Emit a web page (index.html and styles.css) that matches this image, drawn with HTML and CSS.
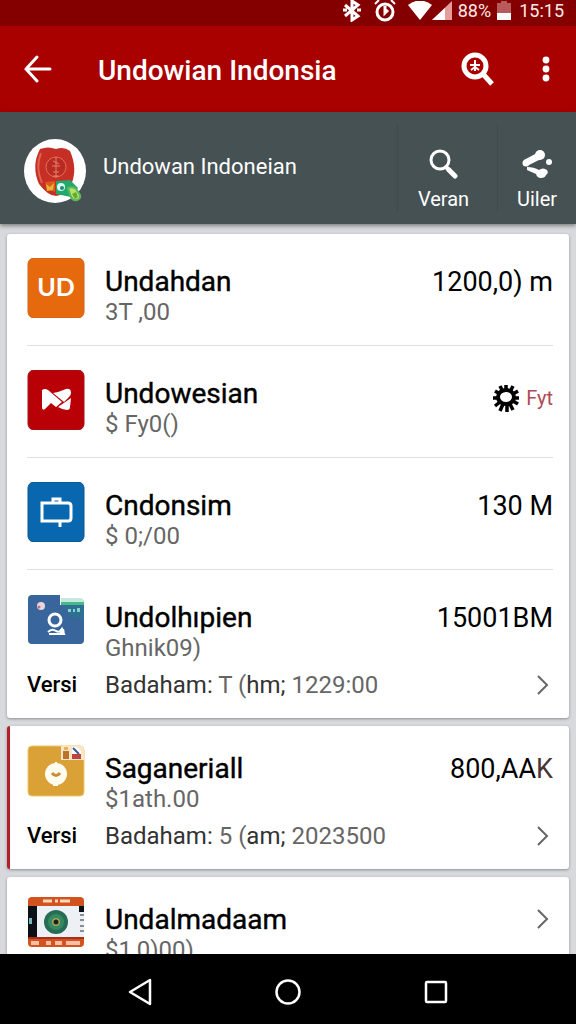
FILE: index.html
```html
<!DOCTYPE html>
<html lang="id">
<head>
  <meta charset="utf-8">
  <meta name="viewport" content="width=device-width, initial-scale=1">
  <title>Undowian Indonsia</title>
  <link rel="stylesheet" href="styles.css">
</head>
<body>
  <div class="screen">
    <div class="status-bar">
      <svg class="bluetooth" width="20" height="22" viewBox="0 0 20 22" fill="none" stroke="#fff" stroke-width="3"><path d="M3 5l13 11-6 4V1l6 4L3 16M1 10h4M15 10h4"/></svg>
      <svg class="alarm" width="22" height="22" viewBox="0 0 22 22" fill="none" stroke="#fff"><circle cx="11" cy="12" r="8" stroke-width="3"/><path d="M11 6v7l3-3" stroke-width="3"/><path d="M1 4l4-4M21 4l-4-4" stroke-width="2"/></svg>
      <svg width="24" height="20" viewBox="0 0 24 20"><path d="M0 4Q12-5 24 4L12 19z" fill="#fff"/></svg>
      <svg class="signal" width="20" height="20" viewBox="0 0 20 20"><path d="M0 19L20 0v19z" fill="#e79c9c"/><path d="M0 19L13 7v12z" fill="#fff"/></svg>
      <span class="battery-level">88%</span>
      <svg class="battery" width="14" height="20" viewBox="0 0 14 20"><path d="M4 0h6v2h4v10H0V2h4z" fill="#b85a5a"/><path d="M0 12h14v7H0z" fill="#fff"/></svg>
      <span>15:15</span>
    </div>

    <header class="app-bar">
      <button class="icon-button" aria-label="Back">
        <svg width="28" height="28" viewBox="0 0 28 28" fill="none" stroke="#fff" stroke-width="3" stroke-linecap="round"><path d="M26 14H2M13 2L2 14l11 12"/></svg>
      </button>
      <h1>Undowian Indonsia</h1>
      <button class="icon-button search-button" aria-label="Search">
        <svg width="34" height="34" viewBox="0 0 34 34" fill="none" stroke="#fff"><circle cx="15" cy="14" r="11" stroke-width="5"/><path d="M23 22l9 10" stroke-width="5"/><path d="M15 8v11M10 13h10M11 18l4-3 4 3" stroke-width="2"/></svg>
      </button>
      <button class="icon-button" aria-label="More">
        <svg width="8" height="26" viewBox="0 0 8 26" fill="#fff"><circle cx="4" cy="4" r="3.4"/><circle cx="4" cy="13" r="3.4"/><circle cx="4" cy="22" r="3.4"/></svg>
      </button>
    </header>

    <section class="profile">
      <svg class="avatar" width="62" height="64" viewBox="0 0 62 64">
        <ellipse cx="31" cy="32" rx="31" ry="32" fill="#fff"/>
        <path d="M16 10q8-3 16 0 8-3 14 2 8 18 1 34-7 11-15 11T15 45Q7 27 16 10z" fill="#c62f25"/>
        <path d="M17 14q-6 14 1 30" fill="none" stroke="#e0614f" stroke-width="2"/>
        <circle cx="32" cy="28" r="10" fill="#b92a22" stroke="#e56e57"/>
        <path d="M32 18v21M29 22l6 3M28 27h8M29 33h6M29 37h6" stroke="#e5806c"/>
        <path d="M21 43l10-1v11l-8-3z" fill="#dc5a1d"/>
        <path d="M22 45l4 3 4-4-1 7-6 1z" fill="#e8b62e"/>
        <path d="M32 42l14-1 8 8-7 9-15-3z" fill="#22a86e"/>
        <circle cx="37" cy="48" r="4" fill="#d8fff0"/><circle cx="38" cy="49" r="2" fill="#1d8c78"/>
        <path d="M44 49q5-2 8 1l4 6q1 4-3 5-4 1-6-3z" fill="#b7e36b" stroke="#5cb85c" stroke-width="2"/>
        <path d="M48 55l4-2 2 5-3 2z" fill="#69aa2e"/>
      </svg>
      <span class="profile-name">Undowan Indoneian</span>
      <button class="action">
        <svg width="30" height="30" viewBox="0 0 30 30" fill="none" stroke="#fff"><circle cx="11" cy="11" r="9" stroke-width="3"/><path d="M17 18l3 3" stroke-width="4"/><path d="M20 21l6 6" stroke-width="5" stroke-linecap="round"/></svg>
        <span>Veran</span>
      </button>
      <button class="action action-share">
        <svg width="30" height="30" viewBox="0 0 30 30" fill="#fff"><circle cx="18" cy="6" r="5"/><circle cx="27" cy="13" r="3"/><circle cx="4" cy="14" r="3.5"/><path d="M2 11l13-7 4 6-14 7z"/><path d="M5 18q7 0 12 3 4-3 8 0 2 3-1 5-1 3-5 3-4 0-5-4l-9-4z"/></svg>
        <span>Uiler</span>
      </button>
    </section>

    <main class="content">
      <div class="card">
        <div class="row">
          <svg class="row-icon" width="58" height="60" viewBox="0 0 58 60"><rect x="1" y="0" width="56" height="60" rx="6" fill="#e6690d" stroke="#c9651d"/><text class="logo-text" x="29" y="38" text-anchor="middle">UD</text></svg>
          <div class="text">
            <h2>Undahdan</h2>
            <p>3T ,00</p>
          </div>
          <span class="amount">1200,0) m</span>
        </div>
        <div class="row">
          <svg class="row-icon" width="58" height="60" viewBox="0 0 58 60"><rect x="1" y="0" width="56" height="60" rx="6" fill="#b90006" stroke="#98171b"/><path d="M15 20q3-2 6 0l14 12-6 5-5-4-6 6q-3 2-3-2z" fill="#fff"/><path d="M26 23l5-1 8-3q5-1 5 4 0 2-2 4l-5 5z" fill="#fff"/><path d="M44 28l-1 9q0 3-3 3-4 0-9-3z" fill="#fff"/></svg>
          <div class="text">
            <h2>Undowesian</h2>
            <p>$ Fy0()</p>
          </div>
          <span class="amount amount-red">
            <svg width="28" height="28" viewBox="0 0 28 28"><path d="M14 7V1M18 8l3-6M21 10l5-3M22 14h5M21 17l5 3M18 20l3 6M15 20v8M11 20l-3 7M8 18l-5 4M7 14H1M8 10L3 7M11 8L8 2" stroke="#000" stroke-width="3.500"/><ellipse cx="14" cy="13" rx="8" ry="7" fill="#fff" stroke="#000" stroke-width="4"/></svg>
            <span>Fyt</span>
          </span>
        </div>
        <div class="row">
          <svg class="row-icon" width="58" height="60" viewBox="0 0 58 60"><rect x="1" y="0" width="56" height="60" rx="6" fill="#0867ae" stroke="#07548d"/><path d="M15 21h26q3 0 3 3v12q0 3-3 3H15z" fill="none" stroke="#fff" stroke-width="3"/><path d="M26 21v-4h7v4M33 39v6" fill="none" stroke="#fff" stroke-width="3"/></svg>
          <div class="text">
            <h2>Cndonsim</h2>
            <p>$ 0;/00</p>
          </div>
          <span class="amount">130 M</span>
        </div>
        <div class="row">
          <svg class="row-icon" width="58" height="50" viewBox="0 0 58 50">
            <path d="M1 5q0-4 4-4h28v10h24v35q0 4-4 4H5q-4 0-4-4z" fill="#38659c"/>
            <path d="M34 4h19q4 0 4 4v3H34z" fill="#c9e8dd"/><path d="M34 8h23v3H34z" fill="#45b98b"/><path d="M37 11h20v13H45z" fill="#2f6f91"/>
            <path d="M41 15h3v3h-3zM46 15h2v3h-2zM50 14h3v4h-3z" fill="#80d4d0"/>
            <circle cx="14" cy="12" r="4" fill="#e9d6dc"/><circle cx="12" cy="13" r="1.500" fill="#b87484"/>
            <circle cx="28" cy="26" r="6" fill="none" stroke="#fff" stroke-width="3"/>
            <path d="M21 38q4-4 8-1 4 2 6-2l2 5H22" fill="none" stroke="#fff" stroke-width="2"/><circle cx="35" cy="37" r="2.500" fill="#fff"/>
          </svg>
          <div class="text">
            <h2>Undolhıpien</h2>
            <p>Ghnik09)</p>
          </div>
          <span class="amount">15001BM</span>
          <div class="detail">
            <strong>Versi</strong>
            <span class="detail-label">Badaham: <span class="detail-value">T (</span>hm; <span class="detail-value">1229:00</span></span>
            <button class="more" aria-label="Undolhıpien"><svg width="20" height="20" viewBox="0 0 20 20"><path d="M5 1l9 9-9 9" fill="none" stroke="#666" stroke-width="2"/></svg></button>
          </div>
        </div>
      </div>

      <div class="card card-marked">
        <div class="row">
          <svg class="row-icon" width="58" height="52" viewBox="0 0 58 52">
            <rect x="1" y="1" width="56" height="50" rx="4" fill="#d9a136" stroke="#f0c568"/>
            <path d="M34 1h20q3 0 3 3v11H34z" fill="#f8e7c6"/><path d="M36 6h6v8h-6z" fill="#bb722a"/><path d="M37 2h4v3h-4z" fill="#e8b15a"/><path d="M45 2h5l4 4v8h-9z" fill="#fff"/><path d="M46 3l6 6" stroke="#365a9b" stroke-width="2"/><path d="M45 9h9v5h-9z" fill="#bd4340"/>
            <circle cx="29" cy="29" r="11" fill="#fffdf0"/><path d="M25 28q4 5 8 0" fill="none" stroke="#c98c33" stroke-width="3"/><path d="M28 18h2M26 40h5" stroke="#fffdf0" stroke-width="2"/>
          </svg>
          <div class="text">
            <h2>Saganeriall</h2>
            <p>$1ath.00</p>
          </div>
          <span class="amount">800,AA<span class="amount-tail">K</span></span>
          <div class="detail">
            <strong>Versi</strong>
            <span class="detail-label">Badaham: <span class="detail-value">5 (</span>am; <span class="detail-value">2023500</span></span>
            <button class="more" aria-label="Saganeriall"><svg width="20" height="20" viewBox="0 0 20 20"><path d="M5 1l9 9-9 9" fill="none" stroke="#666" stroke-width="2"/></svg></button>
          </div>
        </div>
      </div>

      <div class="card">
        <div class="row">
          <svg class="row-icon" width="58" height="52" viewBox="0 0 58 52">
            <rect x="1" y="1" width="56" height="50" rx="4" fill="#d3531f"/>
            <path d="M1 10h56v32H1z" fill="#edf0f5"/><path d="M1 10h9v32H1zM52 10h5v6h-5z" fill="#0c1016"/><path d="M2 22h3v6H2z" fill="#75bac0"/>
            <path d="M53 19h4M53 24h4M53 30h4M53 35h4" stroke="#89909d" stroke-width="2"/>
            <circle cx="29" cy="26" r="12" fill="#266c56"/><circle cx="29" cy="26" r="8" fill="#368a62"/><circle cx="29" cy="26" r="4" fill="#a9a45a"/><circle cx="29" cy="26" r="2.500" fill="#18251b"/>
            <path d="M16 5h9M28 5h3M33 5h10" stroke="#fbd7bd" stroke-width="3"/><path d="M1 41h56v2H1z" fill="#a92e1c"/><path d="M4 47h8M19 47h5M28 47h7M39 47h14" stroke="#f8bda6" stroke-width="4"/>
          </svg>
          <div class="text">
            <h2>Undalmadaam</h2>
            <p>$1,0)00)</p>
          </div>
          <button class="more" aria-label="Undalmadaam"><svg width="20" height="20" viewBox="0 0 20 20"><path d="M5 1l9 9-9 9" fill="none" stroke="#666" stroke-width="2"/></svg></button>
        </div>
      </div>
    </main>

    <nav class="nav-bar">
      <button aria-label="Back"><svg width="26" height="28" viewBox="0 0 26 28" fill="none" stroke="#fff" stroke-width="2.500" stroke-linejoin="round"><path d="M23 2v24L3 14z"/></svg></button>
      <button aria-label="Home"><svg width="26" height="28" viewBox="0 0 26 28" fill="none" stroke="#fff" stroke-width="2.500"><circle cx="13" cy="14" r="11.500"/></svg></button>
      <button aria-label="Recent apps"><svg width="26" height="28" viewBox="0 0 26 28" fill="none" stroke="#fff" stroke-width="2.500"><rect x="3" y="4" width="20" height="20" rx="1"/></svg></button>
    </nav>
  </div>
</body>
</html>
```

FILE: styles.css
```css
* {
  box-sizing: border-box;
}

body {
  margin: 0;
  font-family: Roboto, "Liberation Sans", sans-serif;
  color: #000;
}

h1, h2, p {
  margin: 0;
}

button {
  padding: 0;
  border: none;
  background: none;
  color: inherit;
  font: inherit;
  cursor: pointer;
}

svg {
  display: block;
  flex: none;
}

.screen {
  display: flex;
  flex-direction: column;
  height: 100vh;
  background-color: #d8d9dc;
}

.status-bar {
  display: flex;
  justify-content: flex-end;
  align-items: center;
  height: 26px;
  flex: none;
  padding: 0 12px 5px 0;
  background-color: #840000;
  color: #ffe9e9;
  font-size: 18px;
  line-height: 20px;
}

.bluetooth, .alarm {
  margin-right: 12px;
}

.signal, .battery-level {
  margin-right: 6px;
}

.battery {
  margin-right: 8px;
}

.app-bar {
  display: flex;
  align-items: center;
  height: 86px;
  flex: none;
  padding: 0 26px 0 24px;
  background-color: #a90000;
  color: #fff;
}

.app-bar h1 {
  flex: 1;
  padding: 4px 0 0 46px;
  font-size: 28px;
  line-height: 32px;
  font-weight: 500;
}

.search-button {
  margin-right: 48px;
}

.profile {
  display: flex;
  align-items: center;
  height: 112px;
  flex: none;
  padding-left: 24px;
  background-color: #465154;
  color: #fff;
  box-shadow: 0 2px 4px rgba(0, 0, 0, 0.4);
}

.avatar {
  margin-top: 6px;
}

.profile-name {
  flex: 1;
  padding: 0 0 2px 17px;
  font-size: 22px;
  line-height: 28px;
}

.action {
  display: flex;
  flex-direction: column;
  align-items: center;
  gap: 8px;
  width: 100px;
  padding: 26px 8px 2px 0;
  border-left: 1px solid #404b4e;
  font-size: 20px;
  line-height: 24px;
}

.action-share {
  width: 79px;
  padding-right: 0;
}

.content {
  display: flex;
  flex-direction: column;
  flex: 1;
  gap: 8px;
  min-height: 0;
  padding: 10px 7px 0;
  overflow: hidden;
}

.card {
  flex: none;
  padding: 0 16px 0 20px;
  border-radius: 3px;
  background-color: #fff;
  box-shadow: 0 1px 3px rgba(0, 0, 0, 0.35);
}

.card-marked {
  padding-left: 17px;
  border-left: 3px solid #b3202a;
}

.row {
  display: flex;
  flex-wrap: wrap;
  align-items: flex-start;
  padding: 19px 0 18px;
}

.row:not(:only-child) {
  padding-top: 24px;
  border-bottom: 1px solid #dfe0e2;
}

.card .row:last-child {
  padding-bottom: 19px;
  border-bottom: none;
}

.text {
  flex: 1;
  padding: 8px 0 0 20px;
}

.text h2 {
  font-size: 28px;
  line-height: 32px;
  font-weight: 400;
  -webkit-text-stroke: 0.4px #000;
}

.text p {
  color: #666;
  font-size: 24px;
  line-height: 29px;
}

.logo-text {
  fill: #fff;
  font-family: Lato, sans-serif;
  font-size: 25px;
  font-weight: 700;
}

.amount {
  padding-top: 8px;
  font-size: 27px;
  line-height: 32px;
}

.amount-red {
  display: flex;
  align-items: center;
  gap: 6px;
  color: #b04a55;
  font-size: 20px;
  line-height: 40px;
}

.amount-tail {
  color: #4a3535;
}

.detail {
  display: flex;
  align-items: center;
  width: 100%;
  margin-top: 8px;
  line-height: 28px;
}

.detail strong {
  width: 78px;
  font-size: 22px;
  font-weight: 500;
}

.detail-label {
  flex: 1;
  color: #333;
  font-size: 24px;
}

.detail-value {
  color: #666;
}

.row > .more {
  margin-top: 13px;
}

.nav-bar {
  display: flex;
  justify-content: space-between;
  align-items: center;
  height: 70px;
  flex: none;
  padding: 6px 22% 0;
  background-color: #000;
}
```
